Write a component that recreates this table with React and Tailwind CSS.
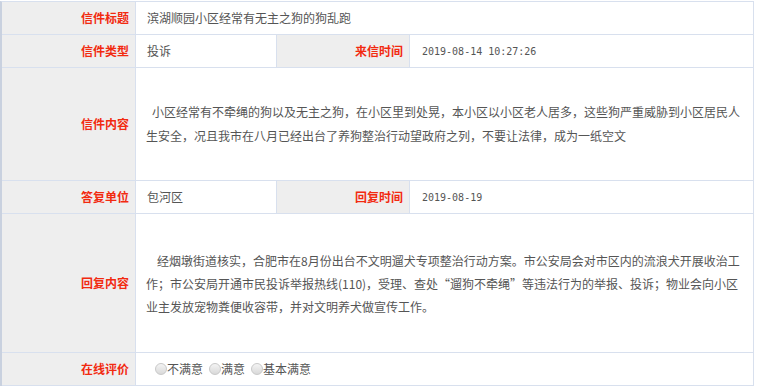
import React from 'react';

const font = { fontFamily: '"Noto Sans CJK SC", "Liberation Sans", sans-serif' };

function Label({ children, className = '' }) {
  return (
    <div className={`flex items-center justify-end bg-[#eeeeee] border-r border-b border-[#d8e0ee] pr-[6px] text-[12px] font-bold text-[#f22a10] ${className}`}>
      {children}
    </div>
  );
}

function Cell({ children, className = '' }) {
  return (
    <div className={`flex items-center bg-white border-r border-b border-[#d8e0ee] text-[12px] text-[#555555] ${className}`}>
      {children}
    </div>
  );
}

function Radio({ label }) {
  return (
    <span className="inline-flex items-center mr-[6px]">
      <span className="inline-block w-[12px] h-[12px] rounded-full border border-[#c9c9c9] bg-gradient-to-b from-[#f4f4f4] to-[#d9d9d9]" />
      <span>{label}</span>
    </span>
  );
}

export default function App() {
  const date = 'font-["DejaVu_Sans_Mono",monospace] text-[10px] tracking-[0px]';
  return (
    <div className="w-[758px] h-[389px] bg-white pt-[1px]" style={font}>
      <div className="grid grid-cols-[134px_141px_133px_344px] w-[754px] border-l-2 border-[#c9d1df] border-t border-t-[#d8e0ee]">
        <Label className="h-[33px]">信件标题</Label>
        <Cell className="col-span-3 h-[33px] pl-[11px]">滨湖顺园小区经常有无主之狗的狗乱跑</Cell>

        <Label className="h-[33px]">信件类型</Label>
        <Cell className="h-[33px] pl-[11px]">投诉</Cell>
        <Label className="h-[33px]">来信时间</Label>
        <Cell className="h-[33px] pl-[12px]">
          <span className={date}>2019-08-14 10:27:26</span>
        </Cell>

        <Label className="h-[113px]">信件内容</Label>
        <Cell className="col-span-3 h-[113px] pl-[10px] pr-[12px]">
          <p className="leading-[24px] indent-[6px]">
            小区经常有不牵绳的狗以及无主之狗，在小区里到处晃，本小区以小区老人居多，这些狗严重威胁到小区居民人生安全，况且我市在八月已经出台了养狗整治行动望政府之列，不要让法律，成为一纸空文
          </p>
        </Cell>

        <Label className="h-[33px]">答复单位</Label>
        <Cell className="h-[33px] pl-[11px]">包河区</Cell>
        <Label className="h-[33px]">回复时间</Label>
        <Cell className="h-[33px] pl-[12px]">
          <span className={date}>2019-08-19</span>
        </Cell>

        <Label className="h-[139px]">回复内容</Label>
        <Cell className="col-span-3 h-[139px] pl-[10px] pr-[12px]">
          <div className="leading-[23px]">
            <div className="whitespace-nowrap pl-[11px]">经烟墩街道核实，合肥市在8月份出台不文明遛犬专项整治行动方案。市公安局会对市区内的流浪犬开展收治工</div>
            <div>作；市公安局开通市民投诉举报热线(110)，受理、查处“遛狗不牵绳”等违法行为的举报、投诉；物业会向小区业主发放宠物粪便收容带，并对文明养犬做宣传工作。</div>
          </div>
        </Cell>

        <Label className="h-[33px]">在线评价</Label>
        <Cell className="col-span-3 h-[33px] pl-[19px]">
          <Radio label="不满意" />
          <Radio label="满意" />
          <Radio label="基本满意" />
        </Cell>
      </div>
    </div>
  );
}
